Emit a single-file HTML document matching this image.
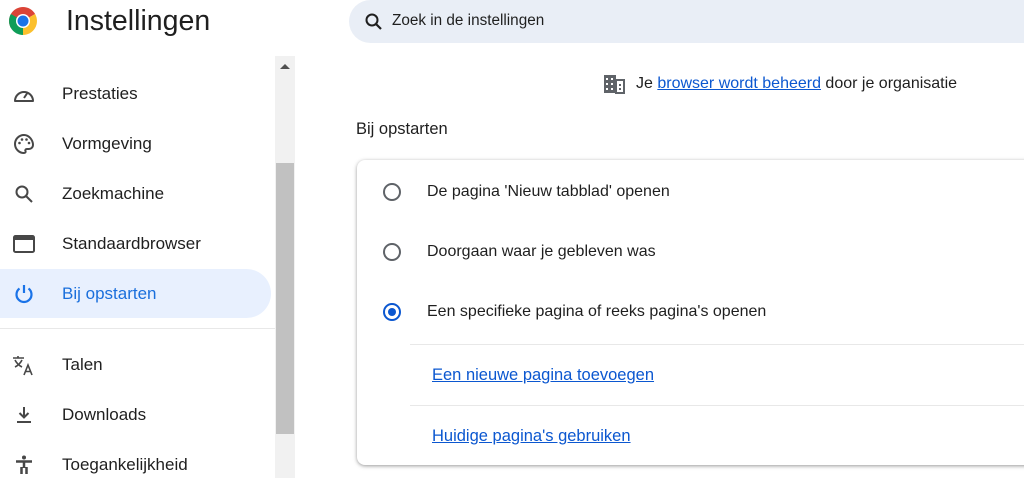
<!DOCTYPE html>
<html><head><meta charset="utf-8"><style>
*{margin:0;padding:0;box-sizing:border-box}
body{width:1024px;height:478px;overflow:hidden;background:#fff;font-family:"Liberation Sans",sans-serif;color:#1f1f1f;position:relative}
.a{position:absolute}
.item{position:absolute;left:0;width:271px;height:50px;display:flex;align-items:center}
.item svg{position:absolute;left:12px}
.item span{position:absolute;left:62px;font-size:17px;color:#1f1f1f;top:15px}
.lnk{color:#0b57d0;text-decoration:underline}
.radio{position:absolute;left:383px;width:18px;height:18px;border:2px solid #5f6368;border-radius:50%}
.rt{position:absolute;left:427px;font-size:16px;color:#1f1f1f}
</style></head><body>
<svg class="a" style="left:8px;top:6px" width="30" height="30" viewBox="0 0 30 30">
<path d="M15 15 L15 1 A14 14 0 0 1 27.1 8 Z" fill="#db4437"/>
<path d="M15 1 A14 14 0 0 0 2.9 22 L15 15 Z" fill="#db4437"/>
<path d="M2.9 8 A14 14 0 0 0 15 29 L15 15 Z" fill="#0f9d58"/>
<path d="M15 29 A14 14 0 0 0 27.1 8 L15 15 Z" fill="#fbc02d"/>
<circle cx="15" cy="15" r="7" fill="#fff"/><circle cx="15" cy="15" r="5.5" fill="#1a73e8"/></svg>
<div class="a" style="left:66px;top:5px;font-size:28.5px;color:#1f1f1f">Instellingen</div>
<div class="a" style="left:349px;top:0;width:700px;height:43px;background:#e9eef6;border-radius:22px"></div>
<svg class="a" style="left:364px;top:12px" width="20" height="20" viewBox="0 0 20 20"><circle cx="8" cy="8" r="5.5" fill="none" stroke="#1f1f1f" stroke-width="2"/><path d="M12 12l5 5" stroke="#1f1f1f" stroke-width="2.2"/></svg>
<div class="a" style="left:392px;top:12px;font-size:15.3px;color:#1f1f1f">Zoek in de instellingen</div>

<div class="a" style="left:275px;top:56px;width:20px;height:422px;background:#f1f1f1"></div>
<div class="a" style="left:276px;top:163px;width:18px;height:271px;background:#c1c1c1"></div>
<div class="a" style="left:280px;top:64px;width:0;height:0;border-left:5px solid transparent;border-right:5px solid transparent;border-bottom:5px solid #505050"></div>

<div class="a" style="left:0;top:269px;width:271px;height:49px;background:#e8f0fe;border-radius:0 25px 25px 0"></div>
<div class="a" style="left:0;top:328px;width:275px;height:1px;background:#e8e8e8"></div>

<div class="item" style="top:69px"><svg width="24" height="24" viewBox="0 0 24 24"><path d="M3 19 A9 9 0 1 1 21 19 Z" fill="none" stroke="#474747" stroke-width="2" stroke-linejoin="round"/><path d="M12 16 L16 10" stroke="#474747" stroke-width="2"/></svg><span>Prestaties</span></div>
<div class="item" style="top:119px"><svg width="24" height="24" viewBox="0 0 24 24"><path d="M12 3a9 9 0 0 0 0 18c1.5 0 2-1 1.5-2s0-2 1.5-2h2a4 4 0 0 0 4-4c0-5-4-10-9-10z" fill="none" stroke="#474747" stroke-width="2"/><circle cx="7.5" cy="11" r="1.3" fill="#474747"/><circle cx="10" cy="7.5" r="1.3" fill="#474747"/><circle cx="14.5" cy="7.5" r="1.3" fill="#474747"/><circle cx="17" cy="11" r="1.3" fill="#474747"/></svg><span>Vormgeving</span></div>
<div class="item" style="top:169px"><svg width="24" height="24" viewBox="0 0 24 24"><circle cx="10" cy="10" r="5.5" fill="none" stroke="#474747" stroke-width="2"/><path d="M14 14l6 6" stroke="#474747" stroke-width="2"/></svg><span>Zoekmachine</span></div>
<div class="item" style="top:219px"><svg width="24" height="24" viewBox="0 0 24 24"><rect x="2" y="4" width="20" height="16" rx="1.5" fill="none" stroke="#474747" stroke-width="2"/><rect x="2" y="4" width="20" height="4" fill="#474747"/></svg><span>Standaardbrowser</span></div>
<div class="item" style="top:269px"><svg width="24" height="24" viewBox="0 0 24 24"><path d="M12 3v8" stroke="#1a73e8" stroke-width="2.2"/><path d="M7.5 6.5A7.5 7.5 0 1 0 16.5 6.5" fill="none" stroke="#1a73e8" stroke-width="2.2"/></svg><span style="color:#1a6fdc">Bij opstarten</span></div>
<div class="item" style="top:340px"><svg width="24" height="24" viewBox="0 0 24 24"><path d="M1 5h11M6 3v2M3 7c1.5 3 4 5.5 7 7M10 7c-1.5 3-4 5.5-7 7" stroke="#474747" stroke-width="1.6" fill="none"/><path d="M12 22l4-10 4 10M13.5 18.5h5" stroke="#474747" stroke-width="1.6" fill="none"/></svg><span>Talen</span></div>
<div class="item" style="top:390px"><svg width="24" height="24" viewBox="0 0 24 24"><path d="M12 4v10M7.5 10l4.5 4.5 4.5-4.5" fill="none" stroke="#474747" stroke-width="2"/><path d="M5 19h14" stroke="#474747" stroke-width="2"/></svg><span>Downloads</span></div>
<div class="item" style="top:440px"><svg width="24" height="24" viewBox="0 0 24 24"><circle cx="12" cy="4.5" r="2" fill="#474747"/><path d="M4 8.5h16" stroke="#474747" stroke-width="2.5"/><path d="M12 8v7M9.5 14v7M14.5 14v7" stroke="#474747" stroke-width="2.5"/></svg><span>Toegankelijkheid</span></div>

<svg class="a" style="left:603px;top:73px" width="22" height="22" viewBox="0 0 22 22"><rect x="1" y="2" width="12" height="18" fill="#5f6368"/><rect x="13" y="7" width="8" height="13" fill="none" stroke="#5f6368" stroke-width="2"/><g fill="#fff"><rect x="3" y="5" width="2" height="2"/><rect x="8" y="5" width="2" height="2"/><rect x="3" y="10" width="2" height="2"/><rect x="8" y="10" width="2" height="2"/><rect x="3" y="15" width="2" height="2"/><rect x="8" y="15" width="2" height="2"/></g><rect x="16" y="11" width="2" height="2" fill="#5f6368"/><rect x="16" y="15" width="2" height="2" fill="#5f6368"/></svg>
<div class="a" style="left:636px;top:75px;font-size:16px;color:#1f1f1f">Je <span class="lnk">browser wordt beheerd</span> door je organisatie</div>
<div class="a" style="left:356px;top:120px;font-size:16.5px;color:#1f1f1f">Bij opstarten</div>

<div class="a" style="left:357px;top:160px;width:700px;height:305px;background:#fff;border-radius:8px;box-shadow:0 1px 3px rgba(0,0,0,.3),0 1px 6px rgba(0,0,0,.12)"></div>
<div class="radio" style="top:183px"></div><div class="rt" style="top:183px">De pagina 'Nieuw tabblad' openen</div>
<div class="radio" style="top:243px"></div><div class="rt" style="top:243px">Doorgaan waar je gebleven was</div>
<div class="radio" style="top:303px;border-color:#0b57d0"><div style="margin:3px;width:8px;height:8px;border-radius:50%;background:#0b57d0"></div></div><div class="rt" style="top:303px">Een specifieke pagina of reeks pagina's openen</div>
<div class="a" style="left:410px;top:344px;width:620px;height:1px;background:#e8e8e8"></div>
<div class="a lnk" style="left:432px;top:366px;font-size:16.5px">Een nieuwe pagina toevoegen</div>
<div class="a" style="left:410px;top:405px;width:620px;height:1px;background:#e8e8e8"></div>
<div class="a lnk" style="left:432px;top:427px;font-size:16.5px">Huidige pagina's gebruiken</div>
</body></html>
